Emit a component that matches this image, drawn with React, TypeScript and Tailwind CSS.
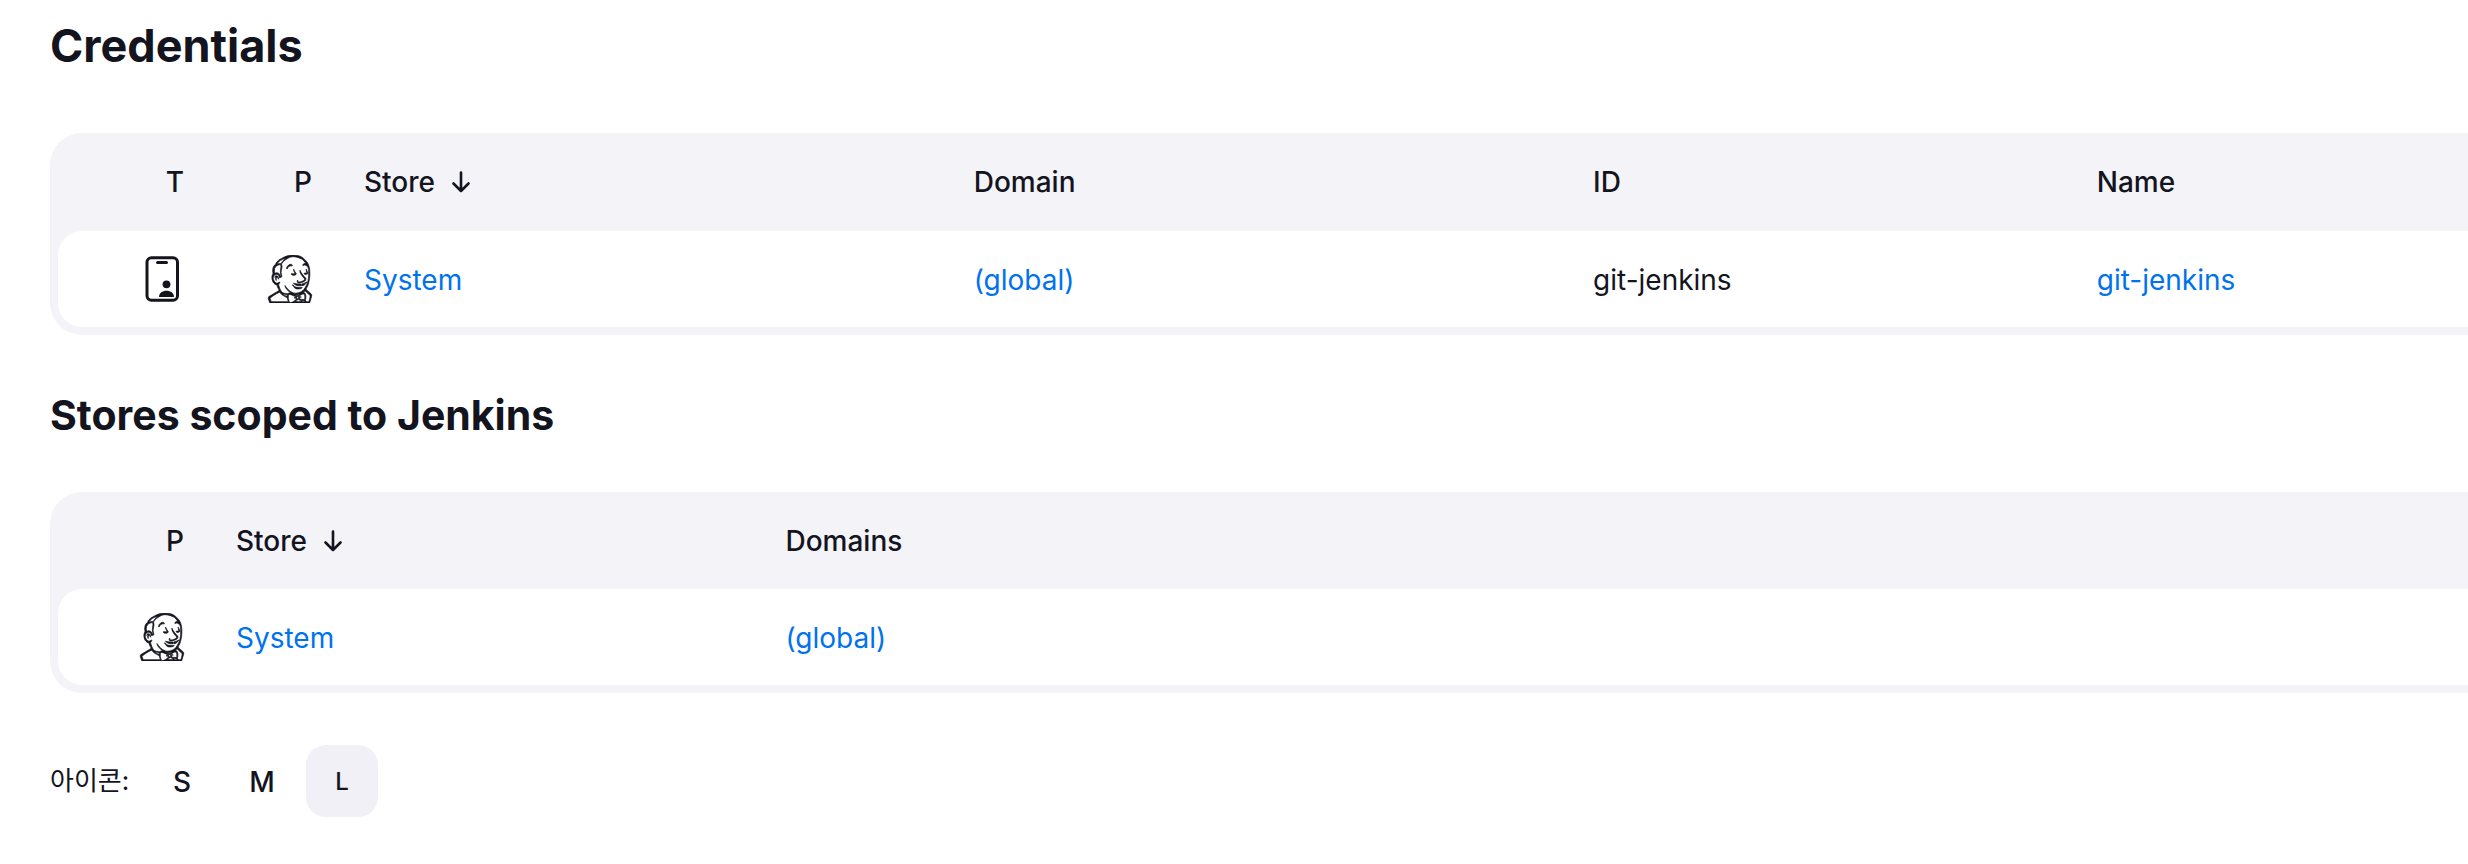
import { SiJenkins } from 'react-icons/si';
import { useState } from 'react';

const iconSizes = ['S', 'M', 'L'];

const SortArrow = () => (
  <svg viewBox="0 0 20 22" className="h-[22px] w-5" fill="none" stroke="currentColor" strokeWidth="2.6" strokeLinecap="round" strokeLinejoin="round" aria-hidden="true">
    <path d="M10 1.500v18.500M2.500 12.500 10 20l7.500-7.500" />
  </svg>
);

const CredentialIcon = () => (
  <svg viewBox="0 0 48 48" className="ml-auto size-12" fill="none" aria-hidden="true">
    <rect x="9" y="2.700" width="30.500" height="42.600" rx="4.500" stroke="currentColor" strokeWidth="3" />
    <path d="M19.500 7.600h9" stroke="currentColor" strokeWidth="3" strokeLinecap="round" />
    <circle cx="28.500" cy="29.300" r="3.900" fill="currentColor" />
    <path d="M21 42c0-4.200 3.500-6.300 7.500-6.300s7.500 2.100 7.500 6.300z" fill="currentColor" />
  </svg>
);

const ProviderIcon = () => <SiJenkins className="ml-auto size-12" strokeWidth="0.35" aria-hidden="true" />;

const SortableHeader = ({ className, label }: { className: string; label: string }) => (
  <th className={className}>
    <button className="flex items-center gap-4 font-medium">
      {label}
      <SortArrow />
    </button>
  </th>
);

const App = () => {
  const [size, setSize] = useState('L');
  const link = 'text-[#0072ee] hover:underline';
  const frame = 'rounded-l-[32px] bg-[#f3f3f8] pb-2 pl-2';
  const table = 'w-full table-fixed text-left';
  const cell = 'bg-white pt-0.5 pl-[50px]';

  return (
    <main className="bg-white pl-[50px] font-[Inter,'Noto_Sans_CJK_KR',sans-serif] text-[28px] leading-10 text-[#14141f]">
      <h1 className="pt-4 text-[45px] leading-[60px] font-bold">Credentials</h1>
      <div className={`mt-[57px] ${frame}`}>
        <table className={table}>
          <thead>
            <tr className="h-[98px]">
              <th className="w-32 pr-0.5 text-right font-medium">T</th>
              <th className="w-32 pr-0.5 text-right font-medium">P</th>
              <SortableHeader className="w-[25.3%] pl-[50px]" label="Store" />
              <th className="w-[25.7%] pl-[50px] font-medium">Domain</th>
              <th className="w-[20.9%] pl-[50px] font-medium">ID</th>
              <th className="pl-[50px] font-medium">Name</th>
            </tr>
          </thead>
          <tbody>
            <tr className="h-24">
              <td className="rounded-l-3xl bg-white"><CredentialIcon /></td>
              <td className="bg-white"><ProviderIcon /></td>
              <td className={cell}><a href="#system" className={link}>System</a></td>
              <td className={cell}><a href="#global" className={link}>(global)</a></td>
              <td className={cell}>git-jenkins</td>
              <td className={cell}><a href="#git-jenkins" className={link}>git-jenkins</a></td>
            </tr>
          </tbody>
        </table>
      </div>

      <h2 className="mt-[50px] text-[41px] leading-[60px] font-bold">Stores scoped to Jenkins</h2>
      <div className={`mt-[47px] ${frame}`}>
        <table className={table}>
          <thead>
            <tr className="h-[97px]">
              <th className="w-32 pr-0.5 text-right font-medium">P</th>
              <SortableHeader className="w-[22.8%] pl-[50px]" label="Store" />
              <th className="pl-[50px] font-medium">Domains</th>
            </tr>
          </thead>
          <tbody>
            <tr className="h-24">
              <td className="rounded-l-3xl bg-white"><ProviderIcon /></td>
              <td className={cell}><a href="#store-system" className={link}>System</a></td>
              <td className={cell}><a href="#store-global" className={link}>(global)</a></td>
            </tr>
          </tbody>
        </table>
      </div>

      <div className="mt-[52px] flex items-center gap-2">
        <span className="w-[88px] text-[26px] whitespace-nowrap">아이콘:</span>
        {iconSizes.map((s) => (
          <button
            key={s}
            onClick={() => setSize(s)}
            aria-pressed={size === s}
            className={`size-[72px] rounded-[20px] pt-0.5 font-medium ${size === s ? 'bg-[#f1f0f7] text-2xl' : ''}`}
          >
            {s}
          </button>
        ))}
      </div>
    </main>
  );
};

export default App;
